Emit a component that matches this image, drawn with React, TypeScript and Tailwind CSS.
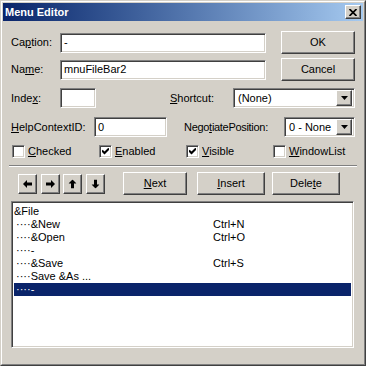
import React from "react";

const raised =
  "border border-t-white border-l-white border-r-[#404040] border-b-[#404040] shadow-[inset_-1px_-1px_#808080] bg-[#d4d0c8]";
const sunken =
  "border border-t-[#808080] border-l-[#808080] border-r-white border-b-white shadow-[inset_1px_1px_#404040,inset_-1px_-1px_#d4d0c8] bg-white";

function U({ children }: { children: React.ReactNode }) {
  return <span className="underline underline-offset-[1px]">{children}</span>;
}

function TextBox({ w, value }: { w: string; value: string }) {
  return (
    <div className={`${sunken} ${w} h-[20px] flex items-center pl-[3px] text-black`}>
      {value}
    </div>
  );
}

function Combo({ w, value }: { w: string; value: string }) {
  return (
    <div className={`${sunken} ${w} h-[20px] flex items-center p-[2px] text-black`}>
      <div className="flex-1 pl-[2px]">{value}</div>
      <div className={`${raised} w-[16px] h-[16px] flex items-center justify-center`}>
        <svg width="7" height="4" viewBox="0 0 7 4">
          <polygon points="0,0 7,0 3.5,4" fill="#000" />
        </svg>
      </div>
    </div>
  );
}

function Check({ checked, label }: { checked: boolean; label: React.ReactNode }) {
  return (
    <div className="w-[87px] flex items-center h-[13px]">
      <div className={`${sunken} w-[13px] h-[13px] flex items-center justify-center`}>
        {checked && (
          <svg width="7" height="7" viewBox="0 0 7 7">
            <path d="M0 2.5 L2.5 5 L7 0.5" stroke="#000" strokeWidth="2" fill="none" />
          </svg>
        )}
      </div>
      <div className="ml-[3px]">{label}</div>
    </div>
  );
}

function Btn({ w, children, h = "h-[23px]" }: { w: string; children: React.ReactNode; h?: string }) {
  return (
    <div className={`${raised} ${w} ${h} flex items-center justify-center text-black`}>
      {children}
    </div>
  );
}

function Arrow({ rot }: { rot: string }) {
  return (
    <div className={`${raised} w-[19px] h-[20px] flex items-center justify-center`}>
      <svg width="9" height="8" viewBox="0 0 9 8" className={rot}>
        <polygon points="0,4 4,0 4,2.5 9,2.5 9,5.5 4,5.5 4,8" fill="#000" />
      </svg>
    </div>
  );
}

const items: { t: string; s?: string; sel?: boolean }[] = [
  { t: "&File" },
  { t: "····&New", s: "Ctrl+N" },
  { t: "····&Open", s: "Ctrl+O" },
  { t: "····-" },
  { t: "····&Save", s: "Ctrl+S" },
  { t: "····Save &As ..." },
  { t: "····-", sel: true },
];

export default function App() {
  return (
    <div
      className="w-[366px] h-[366px] bg-[#d4d0c8] border border-t-[#d4d0c8] border-l-[#d4d0c8] border-r-[#404040] border-b-[#404040] text-[11px] text-black"
      style={{ fontFamily: '"Liberation Sans", Arial, sans-serif' }}
    >
      <div className="w-full h-full border border-t-white border-l-white border-r-[#808080] border-b-[#808080] p-[1px] flex flex-col">
        {/* Title bar */}
        <div className="h-[18px] bg-linear-to-r from-[#0a246a] to-[#a6caf0] flex items-center pl-[2px] pr-[2px]">
          <div className="text-white font-bold text-[11px] flex-1 leading-none">Menu Editor</div>
          <div className={`${raised} w-[16px] h-[14px] flex items-center justify-center`}>
            <svg width="8" height="7" viewBox="0 0 8 7">
              <path d="M0.5 0 L7.5 7 M7.5 0 L0.5 7" stroke="#000" strokeWidth="1.7" />
            </svg>
          </div>
        </div>

        <div className="flex flex-col pl-[8px]">
          {/* Caption row */}
          <div className="flex items-center h-[23px] mt-[10px]">
            <div className="w-[49px]">
              Ca<U>p</U>tion:
            </div>
            <TextBox w="w-[206px]" value="-" />
            <div className="ml-[15px]">
              <Btn w="w-[74px]">OK</Btn>
            </div>
          </div>
          {/* Name row */}
          <div className="flex items-center h-[23px] mt-[4px]">
            <div className="w-[49px]">
              Na<U>m</U>e:
            </div>
            <TextBox w="w-[206px]" value="mnuFileBar2" />
            <div className="ml-[15px]">
              <Btn w="w-[74px]">Cancel</Btn>
            </div>
          </div>
          {/* Index row */}
          <div className="flex items-center h-[20px] mt-[7px]">
            <div className="w-[49px]">
              Inde<U>x</U>:
            </div>
            <TextBox w="w-[36px]" value="" />
            <div className="ml-[74px] w-[63px]">
              <U>S</U>hortcut:
            </div>
            <Combo w="w-[122px]" value="(None)" />
          </div>
          {/* HelpContextID row */}
          <div className="flex items-center h-[20px] mt-[9px]">
            <div className="w-[83px]">
              <U>H</U>elpContextID:
            </div>
            <TextBox w="w-[73px]" value="0" />
            <div className="ml-[17px] w-[100px] tracking-[-0.3px]">
              Nego<U>t</U>iatePosition:
            </div>
            <Combo w="w-[71px]" value="0 - None" />
          </div>
          {/* Checkboxes */}
          <div className="flex items-center mt-[8px] ml-[1px]">
            <Check checked={false} label={<><U>C</U>hecked</>} />
            <Check checked={true} label={<><U>E</U>nabled</>} />
            <Check checked={true} label={<><U>V</U>isible</>} />
            <Check checked={false} label={<><U>W</U>indowList</>} />
          </div>
        </div>

        {/* Separator */}
        <div className="ml-[6px] w-[348px] mt-[7px] border-t border-t-[#808080] border-b border-b-white" />

        {/* Buttons row */}
        <div className="flex items-center h-[23px] mt-[5px] pl-[15px]">
          <Arrow rot="" />
          <div className="ml-[4px]">
            <Arrow rot="rotate-180" />
          </div>
          <div className="ml-[3px]">
            <Arrow rot="rotate-90" />
          </div>
          <div className="ml-[4px]">
            <Arrow rot="-rotate-90" />
          </div>
          <div className="ml-[18px]">
            <Btn w="w-[64px]">
              <span>
                <U>N</U>ext
              </span>
            </Btn>
          </div>
          <div className="ml-[10px]">
            <Btn w="w-[68px]">
              <span>
                <U>I</U>nsert
              </span>
            </Btn>
          </div>
          <div className="ml-[7px]">
            <Btn w="w-[68px]">
              <span>
                Dele<U>t</U>e
              </span>
            </Btn>
          </div>
        </div>

        {/* Listbox */}
        <div className={`${sunken} ml-[8px] mt-[6px] w-[343px] h-[147px] p-[2px] pt-[3px] flex flex-col`}>
          {items.map((it, i) => (
            <div
              key={i}
              className={`h-[13px] leading-[13px] flex whitespace-pre ${
                it.sel ? "bg-[#0a246a] text-white" : "text-black"
              }`}
            >
              <div className={`w-[199px] ${it.t.startsWith("·") ? "pl-[2px]" : ""}`}>{it.t}</div>
              <div>{it.s ?? ""}</div>
            </div>
          ))}
        </div>
      </div>
    </div>
  );
}
